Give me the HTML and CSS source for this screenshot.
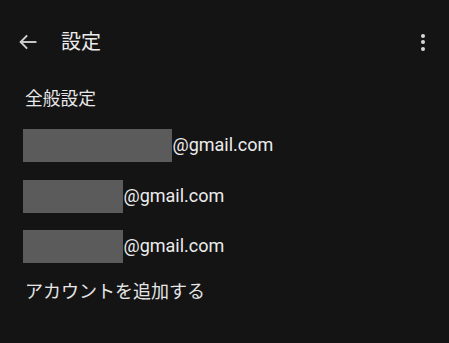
FILE: index.html
```html
<!DOCTYPE html>
<html lang="ja">
<head>
<meta charset="utf-8">
<link rel="stylesheet" href="styles.css">
</head>
<body>
<div class="app">
  <header class="topbar">
    <svg class="back" width="24" height="24" viewBox="0 0 24 24" fill="none" stroke="#cfcfcf" stroke-width="1.9" stroke-linecap="square">
      <path d="M19.5 12H5"/>
      <path d="M10.5 6 4.6 12l5.9 6"/>
    </svg>
    <h1 class="title">設定</h1>
    <div class="menu"><span></span><span></span><span></span></div>
  </header>
  <div class="section">全般設定</div>
  <div class="row row1"><span class="mask w148"></span><span class="mail">@gmail.com</span></div>
  <div class="row row2"><span class="mask w100"></span><span class="mail">@gmail.com</span></div>
  <div class="row row3"><span class="mask w100"></span><span class="mail">@gmail.com</span></div>
  <div class="add">アカウントを追加する</div>
</div>
</body>
</html>
```
FILE: styles.css
```css
html, body {
  margin: 0;
  padding: 0;
  background: #141414;
}
body {
  width: 449px;
  height: 343px;
  overflow: hidden;
  font-family: Roboto, "Noto Sans CJK JP", sans-serif;
  color: #e6e6e6;
}
.topbar {
  height: 84px;
  display: flex;
  align-items: center;
  padding-left: 16px;
  padding-right: 24px;
}
.back {
  display: block;
  flex: none;
}
.title {
  margin: 0 0 0 21px;
  font-size: 20px;
  font-weight: 400;
  line-height: 24px;
  color: #ececec;
  flex: 1;
}
.menu {
  display: flex;
  flex-direction: column;
  gap: 2.5px;
}
.menu span {
  width: 4px;
  height: 4px;
  border-radius: 50%;
  background: #d8d8d8;
}
.section {
  height: 30px;
  line-height: 30px;
  padding-left: 25px;
  font-size: 17.8px;
  color: #e8e8e8;
}
.row {
  display: flex;
  align-items: center;
  padding-left: 23px;
  height: 33px;
}
.row1 { margin-top: 15px; }
.row2 { margin-top: 18px; }
.row3 { margin-top: 17px; }
.mask {
  display: block;
  height: 33px;
  background: #5b5b5b;
}
.w148 { width: 149px; }
.w100 { width: 100px; }
.mail {
  font-size: 18px;
  color: #ececec;
  margin-left: 0.5px;
  position: relative;
  top: -1px;
}
.add {
  margin-top: 17px;
  padding-left: 25px;
  font-size: 18px;
  line-height: 24px;
  color: #e6e6e6;
}
```
